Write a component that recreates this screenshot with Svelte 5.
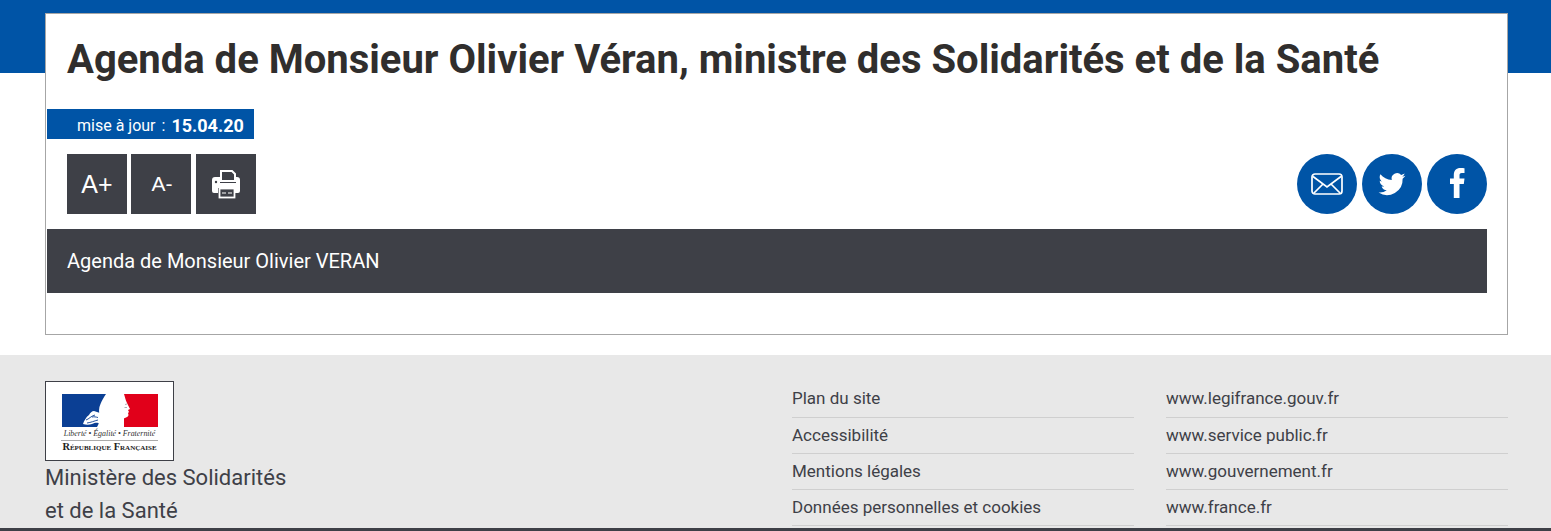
<script lang="ts">
	const siteLinks = ['Plan du site', 'Accessibilité', 'Mentions légales', 'Données personnelles et cookies'];
	const webLinks = ['www.legifrance.gouv.fr', 'www.service public.fr', 'www.gouvernement.fr', 'www.france.fr'];
</script>

<div class="page">
	<div class="band"></div>
	<main class="card">
		<h1>Agenda de Monsieur Olivier Véran, ministre des Solidarités et de la Santé</h1>
		<div class="update">
			<span>mise à jour</span><span class="sep">:</span><strong>15.04.20</strong>
		</div>
		<div class="tools">
			<div class="squares">
				<button class="square plus">A+</button>
				<button class="square minus">A-</button>
				<button class="square print" aria-label="Imprimer">
					<svg width="30" height="30" viewBox="0 0 30 30">
						<path d="M10 2h11l3 3v7H10z" fill="none" stroke="#fff" stroke-width="2" />
						<path d="M4 8h5v6h16V8h1a3 3 0 0 1 3 3v11a2 2 0 0 1-2 2h-3v-5H7v5H3a2 2 0 0 1-2-2V11a3 3 0 0 1 3-3z" fill="#fff" />
						<circle cx="5" cy="13" r="1.200" fill="#3e4047" />
						<rect x="8.500" y="19.500" width="15" height="9" fill="#3e4047" stroke="#fff" stroke-width="1.800" />
						<path d="M11 24h4M17 24h4" stroke="#fff" stroke-width="1.200" />
					</svg>
				</button>
			</div>
			<div class="rounds">
				<a class="round" href="#mail" aria-label="Courriel">
					<svg width="32" height="22" viewBox="0 0 32 22" fill="none" stroke="#fff" stroke-width="1.700">
						<rect x="1" y="1" width="30" height="20" rx="3" />
						<path d="M2 3.500l14 10.500L30 3.500M3 20l9-9M29 20l-9-9" />
					</svg>
				</a>
				<a class="round" href="#twitter" aria-label="Twitter">
					<svg width="28" height="28" viewBox="0 0 24 24">
						<path fill="#fff" d="M23.500 4.900c-.9.400-1.800.650-2.700.800 1-.6 1.700-1.500 2.100-2.600-.9.550-1.900.950-3 1.150A4.700 4.700 0 0 0 11.800 8.500C7.900 8.300 4.400 6.400 2.100 3.600c-1.250 2.150-.6 4.900 1.450 6.300-.75 0-1.450-.25-2.100-.6 0 2.250 1.600 4.200 3.750 4.650-.7.200-1.400.200-2.100.100.6 1.900 2.350 3.250 4.400 3.300A9.500 9.500 0 0 1 .5 19.300 13.400 13.400 0 0 0 21.100 7.400c.95-.7 1.750-1.500 2.400-2.500z" />
					</svg>
				</a>
				<a class="round" href="#facebook" aria-label="Facebook">
					<svg class="fb" width="15" height="30" viewBox="0 0 15 30">
						<path fill="#fff" d="M3.800 30V16H0v-5.500h3.800V7C3.800 2.500 6.300 0 10.500 0c1.900 0 3.500.1 4 .2V5h-2.700c-2 0-2.300 1-2.300 2.300v3.200h5l-.7 5.500h-4.300V30z" />
					</svg>
				</a>
			</div>
		</div>
		<div class="subject">Agenda de Monsieur Olivier VERAN</div>
	</main>

	<footer>
		<div class="inner">
			<div class="ministry">
				<div class="logo">
					<div class="flag">
						<svg width="96" height="33" viewBox="0 0 96 33">
							<rect width="96" height="33" fill="#fff" />
							<rect width="44" height="33" fill="#0b3f94" />
							<rect x="62" width="34" height="33" fill="#e1001a" />
							<path fill="#fff" d="M44 0h18c1 3 1.500 6 3 9l3 6-2 1 1 2-1 1 .5 2c-.5 3-5 3-7.500 4.500L56 33H35c2-3 3-7 2.500-11-.5-4-1-8 1-12 1.500-4 3.500-7 5.500-10z" />
							<path fill="#fff" d="M21 30c1-3 3-7 6-9 1-2 3-4 5-4l6 2v11c-3-2-5-1-8 0-3 1-6 1-9 0z" />
							<path fill="none" stroke="#0b3f94" stroke-width=".9" d="M24 26c3-1 5-4 9-5M25 29c4-.5 7-2 11-3M30 23c2-.5 4 0 6 .5" />
							<path fill="none" stroke="#8d8f96" stroke-width=".7" d="M62.500 13.500h2.500M63 10.500l2-.5" />
						</svg>
					</div>
					<div class="motto">Liberté • Égalité • Fraternité</div>
					<div class="republic">République Française</div>
				</div>
				<p>Ministère des Solidarités<br />et de la Santé</p>
			</div>
			<ul class="links first">
				{#each siteLinks as link}
					<li>{link}</li>
				{/each}
			</ul>
			<ul class="links">
				{#each webLinks as link}
					<li>{link}</li>
				{/each}
			</ul>
		</div>
		<div class="bottom"></div>
	</footer>
</div>

<style>
	:global(body) {
		margin: 0;
		background: #fff;
	}
	.page {
		position: relative;
		height: 531px;
		overflow: hidden;
		font-family: Roboto, 'Liberation Sans', sans-serif;
		color: #3e4047;
	}
	.band {
		height: 73px;
		margin-bottom: -60px;
		background: #0054a6;
	}
	.card {
		position: relative;
		box-sizing: border-box;
		width: 1463px;
		height: 322px;
		margin-left: 45px;
		padding-top: 21px;
		background: #fff;
		border: 1px solid #a6a6a6;
	}
	h1 {
		margin: 0 0 0 21px;
		height: 74px;
		font-size: 40px;
		line-height: 49px;
		font-weight: 700;
		color: #302e2d;
		white-space: nowrap;
	}
	.update {
		display: flex;
		align-items: center;
		box-sizing: border-box;
		width: 207px;
		height: 30px;
		margin-left: 1px;
		padding: 3px 0 0 30px;
		background: #0054a6;
		color: #fff;
		font-size: 16px;
	}
	.sep {
		margin: 0 6px 0 6px;
	}
	.update strong {
		font-size: 18px;
	}
	.tools {
		display: flex;
		justify-content: space-between;
		margin: 15px 20px 15px 21px;
	}
	.squares {
		display: flex;
		gap: 4px;
	}
	.square {
		display: flex;
		align-items: center;
		justify-content: center;
		width: 60px;
		height: 60px;
		padding: 0;
		border: 0;
		background: #3e4047;
		color: #fff;
		font-family: 'Liberation Sans', sans-serif;
	}
	.plus {
		font-size: 25px;
	}
	.minus {
		padding-left: 2px;
		font-size: 21px;
	}
	.print {
		margin-left: 1px;
	}
	.rounds {
		display: flex;
		gap: 5px;
	}
	.round {
		display: flex;
		align-items: center;
		justify-content: center;
		width: 60px;
		height: 60px;
		border-radius: 50%;
		background: #0054a6;
	}
	.fb {
		margin-bottom: 2px;
	}
	.subject {
		display: flex;
		align-items: center;
		height: 64px;
		margin: 0 20px 0 1px;
		padding-left: 20px;
		background: #3e4047;
		color: #fff;
		font-size: 20px;
	}
	footer {
		position: relative;
		height: 176px;
		margin-top: 20px;
		background: #e8e8e8;
	}
	.inner {
		display: flex;
		padding: 26px 43px 0 45px;
	}
	.ministry {
		width: 747px;
		flex: none;
	}
	.logo {
		box-sizing: border-box;
		width: 129px;
		height: 80px;
		padding-top: 12px;
		background: #fff;
		border: 1px solid #3e4047;
		text-align: center;
	}
	.flag {
		height: 33px;
		line-height: 0;
	}
	.motto {
		margin: 2px 15px 0;
		padding-bottom: 1px;
		border-bottom: 1px solid #aaa;
		font-family: 'Liberation Serif', serif;
		font-style: italic;
		font-size: 7.900px;
		line-height: 10px;
		white-space: nowrap;
		color: #333;
	}
	.republic {
		font-family: 'Liberation Serif', serif;
		font-weight: 700;
		font-variant: small-caps;
		font-size: 10.400px;
		line-height: 12px;
		white-space: nowrap;
		color: #222;
	}
	.ministry p {
		margin: 0;
		font-size: 22px;
		line-height: 33px;
	}
	.links {
		flex: none;
		width: 342px;
		margin: 0;
		padding: 0;
		list-style: none;
		font-size: 17px;
	}
	.links.first {
		margin-right: 32px;
	}
	.links li {
		box-sizing: border-box;
		height: 36px;
		line-height: 34px;
		border-bottom: 1px solid #cfcfcf;
	}
	.links li:first-child {
		height: 37px;
	}
	.bottom {
		position: absolute;
		left: 0;
		right: 0;
		bottom: 0;
		height: 3px;
		background: #3e4047;
	}
</style>
